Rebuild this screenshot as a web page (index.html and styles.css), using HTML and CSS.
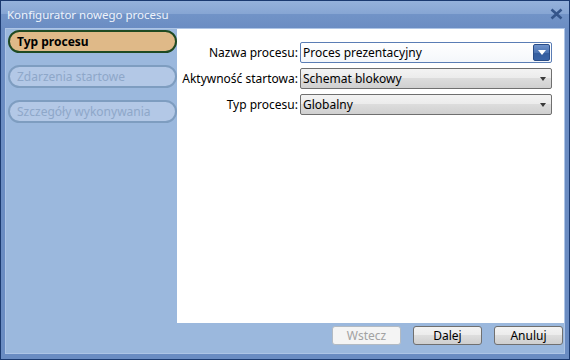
FILE: index.html
```html
<!DOCTYPE html>
<html lang="pl">
<head>
    <meta charset="UTF-8">
    <title>Konfigurator nowego procesu</title>
    <link rel="stylesheet" href="styles.css">
</head>
<body>
    <div class="window">
        <div class="titlebar">
            <span class="title">Konfigurator nowego procesu</span>
            <svg class="close" width="13" height="12" viewBox="0 0 13 12">
                <path d="M1.5 1.5 L11.5 10.5 M11.5 1.5 L1.5 10.5" stroke="#34558a" stroke-width="2.6" fill="none"/>
            </svg>
        </div>

        <div class="frame">
            <div class="main">
                <div class="sidebar">
                    <div class="step step-active">Typ procesu</div>
                    <div class="step">Zdarzenia startowe</div>
                    <div class="step">Szczegóły wykonywania</div>
                </div>

                <div class="panel">
                    <div class="form">
                        <label>Nazwa procesu:</label>
                        <div class="combo combo-focus">
                            <span>Proces prezentacyjny</span>
                            <span class="drop-btn"></span>
                        </div>

                        <label>Aktywność startowa:</label>
                        <div class="combo">
                            <span>Schemat blokowy</span>
                            <span class="arrow"></span>
                        </div>

                        <label>Typ procesu:</label>
                        <div class="combo">
                            <span>Globalny</span>
                            <span class="arrow"></span>
                        </div>
                    </div>
                </div>
            </div>

            <div class="buttons">
                <button class="btn" disabled>Wstecz</button>
                <button class="btn">Dalej</button>
                <button class="btn">Anuluj</button>
            </div>
        </div>
    </div>
</body>
</html>
```

FILE: styles.css
```css
* {
    margin: 0;
    padding: 0;
    box-sizing: border-box;
}

body {
    font-family: 'Noto Sans', 'Open Sans', sans-serif;
    font-size: 12px;
    color: #000;
    background: #fff;
}

.window {
    width: 570px;
    height: 360px;
    border: 1px solid #1b3a70;
    background: #6a8cc2;
    display: flex;
    flex-direction: column;
}

.titlebar {
    height: 27px;
    display: flex;
    align-items: center;
    justify-content: space-between;
    padding: 0 6px 0 6px;
    background: linear-gradient(#95b2db, #86a5d3 50%, #7193c7 50%, #6b8dc3);
}

.title {
    color: #eef3fb;
    font-size: 11.5px;
    margin-top: -1px;
}

.close {
    margin-top: -2px;
}

.frame {
    flex: 1;
    margin: 0 4px 5px 4px;
    border: 1px solid #aec5e6;
    background: #9bb8dd;
    display: flex;
    flex-direction: column;
}

.main {
    display: flex;
    height: 294px;
}

.sidebar {
    width: 171px;
    padding: 1px 0 0 2px;
    display: flex;
    flex-direction: column;
    gap: 12px;
}

.step {
    height: 23px;
    border: 2px solid #7e9dc0;
    border-radius: 12px;
    background: #b3c8e6;
    color: #8ea7c9;
    padding-left: 7px;
    font-size: 12px;
    line-height: 19px;
    white-space: nowrap;
}

.step-active {
    background: #dfb988;
    border-color: #1f4a22;
    color: #000;
    font-weight: bold;
}

.panel {
    flex: 1;
    background: #fff;
    padding-top: 13px;
}

.form {
    display: grid;
    grid-template-columns: 121px 252px;
    column-gap: 2px;
    row-gap: 5px;
    align-items: center;
}

.form label {
    text-align: right;
    white-space: nowrap;
    font-size: 12px;
}

.combo {
    height: 21px;
    border: 1px solid #6f6f6f;
    border-radius: 2px;
    background: linear-gradient(#f3f3f3, #ebebeb 50%, #dcdcdc 50%, #d0d0d0);
    display: flex;
    align-items: center;
    justify-content: space-between;
    padding-left: 2px;
    font-size: 12px;
}

.combo-focus {
    border-color: #5a7db5;
    background: linear-gradient(#fff, #f4f7fb);
    padding-right: 1px;
}

.drop-btn {
    width: 17px;
    height: 17px;
    border: 1px solid #2a4c86;
    border-radius: 2px;
    background: linear-gradient(#6f93cc, #4d74b2 50%, #355d9d 50%, #3a64a6);
    position: relative;
}

.drop-btn::after {
    content: "";
    position: absolute;
    left: 4px;
    top: 5px;
    border-left: 4px solid transparent;
    border-right: 4px solid transparent;
    border-top: 5px solid #fff;
}

.arrow {
    margin-right: 5px;
    border-left: 3.5px solid transparent;
    border-right: 3.5px solid transparent;
    border-top: 4px solid #3a3a3a;
}

.buttons {
    flex: 1;
    display: flex;
    justify-content: flex-end;
    align-items: flex-start;
    gap: 12px;
    padding: 3px 1px 0 0;
}

.btn {
    width: 69px;
    height: 19px;
    border: 1px solid #707070;
    border-radius: 3px;
    background: linear-gradient(#f3f3f3, #ebebeb 50%, #dddddd 50%, #cfcfcf);
    font-family: inherit;
    font-size: 12px;
    line-height: 16px;
    color: #000;
}

.btn:disabled {
    border-color: #b2bac3;
    background: #f4f4f4;
    color: #a2a2a2;
}
```
